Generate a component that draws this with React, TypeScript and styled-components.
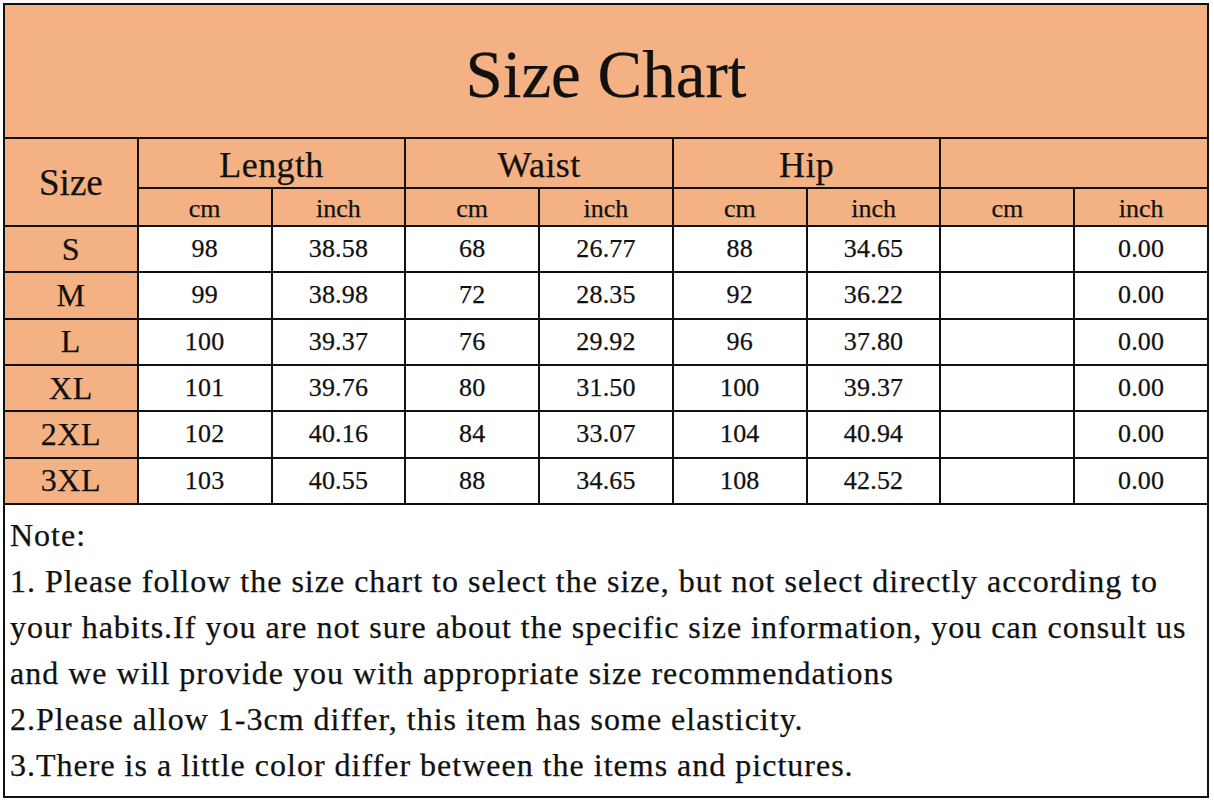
import styled, { createGlobalStyle } from "styled-components";

const PEACH = "#F4B183";

interface SizeRow {
  size: string;
  values: string[];
}

const rows: SizeRow[] = [
  { size: "S", values: ["98", "38.58", "68", "26.77", "88", "34.65", "", "0.00"] },
  { size: "M", values: ["99", "38.98", "72", "28.35", "92", "36.22", "", "0.00"] },
  { size: "L", values: ["100", "39.37", "76", "29.92", "96", "37.80", "", "0.00"] },
  { size: "XL", values: ["101", "39.76", "80", "31.50", "100", "39.37", "", "0.00"] },
  { size: "2XL", values: ["102", "40.16", "84", "33.07", "104", "40.94", "", "0.00"] },
  { size: "3XL", values: ["103", "40.55", "88", "34.65", "108", "42.52", "", "0.00"] },
];

const groups = ["Length", "Waist", "Hip", ""];

const notes = [
  "Note:",
  "1. Please follow the size chart to select the size, but not select directly according to",
  "your habits.If you are not sure about the specific size information, you can consult us",
  "and we will provide you with appropriate size recommendations",
  "2.Please allow 1-3cm differ, this item has some elasticity.",
  "3.There is a little color differ between the items and pictures.",
];

export default function App() {
  return (
    <>
      <GlobalStyle />
      <Page>
        <Sheet>
          <Title>Size Chart</Title>
          <Cell $bg={PEACH} $rows={2} $size={37}>
            Size
          </Cell>
          {groups.map((g, i) => (
            <Cell key={i} $bg={PEACH} $cols={2} $size={36} $spacing={0.4} $pad={4}>
              {g}
            </Cell>
          ))}
          {groups.map((_, i) => [
            <Cell key={`cm${i}`} $bg={PEACH} $size={26} $pad={4}>
              cm
            </Cell>,
            <Cell key={`in${i}`} $bg={PEACH} $size={26} $pad={4}>
              inch
            </Cell>,
          ])}
          {rows.map((r) => [
            <Cell key={r.size} $bg={PEACH} $size={32} $spacing={0.5}>
              {r.size}
            </Cell>,
            ...r.values.map((v, i) => (
              <Cell key={`${r.size}-${i}`} $size={26} $spacing={0.2}>
                {v}
              </Cell>
            )),
          ])}
          <Note>
            {notes.map((n, i) => (
              <NoteLine key={i}>{n}</NoteLine>
            ))}
          </Note>
        </Sheet>
      </Page>
    </>
  );
}

const GlobalStyle = createGlobalStyle`
  body {
    margin: 0;
    background: #fff;
    font-family: "Liberation Serif", "Times New Roman", serif;
    color: #111;
    -webkit-text-stroke: 0.25px #111;
  }
`;

const Page = styled.div`
  padding: 3px 0 0 3px;
  width: 1214px;
  height: 800px;
  box-sizing: border-box;
`;

const Sheet = styled.div`
  width: 1206px;
  box-sizing: border-box;
  display: grid;
  grid-template-columns: repeat(9, 1fr);
  grid-template-rows: 134px 50px 38px repeat(6, 46.33px) 293px;
  border-top: 2px solid #111;
  border-left: 2px solid #111;
`;

const Cell = styled.div<{
  $bg?: string;
  $cols?: number;
  $rows?: number;
  $size: number;
  $spacing?: number;
  $pad?: number;
}>`
  grid-column: span ${(p) => p.$cols ?? 1};
  grid-row: span ${(p) => p.$rows ?? 1};
  display: flex;
  align-items: center;
  justify-content: center;
  padding-top: ${(p) => p.$pad ?? 0}px;
  background: ${(p) => p.$bg ?? "#fff"};
  border-right: 2px solid #111;
  border-bottom: 2px solid #111;
  font-size: ${(p) => p.$size}px;
  letter-spacing: ${(p) => p.$spacing ?? 0}px;
  white-space: nowrap;
  overflow: hidden;
`;

const Title = styled.div`
  grid-column: span 9;
  display: flex;
  align-items: center;
  justify-content: center;
  padding-top: 6px;
  background: ${PEACH};
  border-right: 2px solid #111;
  border-bottom: 2px solid #111;
  font-size: 67px;
`;

const Note = styled.div`
  grid-column: span 9;
  display: flex;
  flex-direction: column;
  padding: 7px 0 0 5px;
  background: #fff;
  border-right: 2px solid #111;
  border-bottom: 2px solid #111;
  font-size: 32px;
  letter-spacing: 1px;
  line-height: 46px;
`;

const NoteLine = styled.div`
  white-space: nowrap;
`;
